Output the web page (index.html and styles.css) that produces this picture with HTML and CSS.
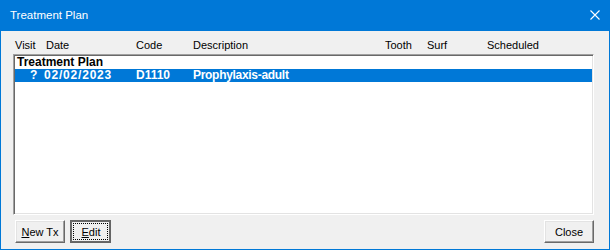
FILE: index.html
```html
<!DOCTYPE html>
<html lang="en">
<head>
    <meta charset="UTF-8">
    <title>Treatment Plan</title>
    <link rel="stylesheet" href="styles.css">
</head>
<body>
    <div class="window">
        <div class="titlebar">
            <span class="title">Treatment Plan</span>
            <svg class="close-x" width="10" height="10" viewBox="0 0 10 10">
                <path d="M0.5 0.5 L9.5 9.5 M9.5 0.5 L0.5 9.5" stroke="#fff" stroke-width="1.1" fill="none"/>
            </svg>
        </div>
        <div class="content">
            <div class="header">
                <span>Visit</span>
                <span>Date</span>
                <span>Code</span>
                <span>Description</span>
                <span>Tooth</span>
                <span>Surf</span>
                <span>Scheduled</span>
            </div>
            <div class="list">
                <div class="group">Treatment Plan</div>
                <div class="row selected">
                    <span class="visit">?</span>
                    <span class="date">02/02/2023</span>
                    <span class="code">D1110</span>
                    <span class="desc">Prophylaxis-adult</span>
                </div>
            </div>
            <div class="buttons">
                <button class="btn"><u>N</u>ew Tx</button>
                <button class="btn default"><span class="focus"><u>E</u>dit</span></button>
                <button class="btn close">Close</button>
            </div>
        </div>
    </div>
</body>
</html>
```

FILE: styles.css
```css
* {
  box-sizing: border-box;
  margin: 0;
}

body {
  background-color: #fff;
  font-family: "Liberation Sans", Arial, sans-serif;
  font-size: 11px;
}

.window {
  width: 610px;
  height: 250px;
  border: 1px solid #0078d7;
  border-top: none;
  background-color: #f0f0f0;
  display: flex;
  flex-direction: column;
}

.titlebar {
  height: 31px;
  background-color: #0078d7;
  color: #fff;
  display: flex;
  align-items: center;
  justify-content: space-between;
  padding: 0 9px 1px 9px;
}

.title {
  font-size: 11.5px;
}

.close-x {
  display: block;
}

.content {
  flex: 1;
  display: flex;
  flex-direction: column;
  padding: 0 15px 6px 12px;
}

.header {
  display: grid;
  grid-template-columns: 31px 90px 57px 192px 42px 60px 1fr;
  padding: 8px 0 2px 2px;
  line-height: 13px;
  color: #000;
}

.list {
  height: 161px;
  background-color: #fff;
  border: 1px solid;
  border-color: #a0a0a0 #fff #fff #a0a0a0;
  box-shadow: inset 1px 1px #696969, inset -1px -1px #e3e3e3;
  padding: 1px;
  font-size: 12px;
  font-weight: bold;
  line-height: 13px;
}

.group {
  padding-left: 2px;
}

.row {
  display: grid;
  grid-template-columns: 29px 92px 57px 1fr;
}

.row.selected {
  background-color: #0078d7;
  color: #fff;
}

.visit {
  padding-left: 15px;
}

.date {
  letter-spacing: 0.8px;
}

.desc {
  letter-spacing: -0.3px;
}

.buttons {
  display: flex;
  gap: 5px;
  margin-top: 5px;
  padding-left: 2px;
}

.btn {
  height: 23px;
  width: 50px;
  padding: 0;
  font-family: "Liberation Sans", Arial, sans-serif;
  font-size: 11px;
  color: #000;
  background-color: #f0f0f0;
  border: 1px solid;
  border-color: #fff #696969 #696969 #fff;
  box-shadow: inset -1px -1px #a0a0a0, inset 1px 1px #e3e3e3;
}

.btn.default {
  width: 41px;
  border-color: #646464;
  box-shadow: inset 0 0 0 1px #696969;
  display: flex;
  padding: 2px;
}

.focus {
  flex: 1;
  display: flex;
  align-items: center;
  justify-content: center;
  border: 1px dotted #000;
  padding-left: 1px;
}

.btn.close {
  margin-left: auto;
}
```
